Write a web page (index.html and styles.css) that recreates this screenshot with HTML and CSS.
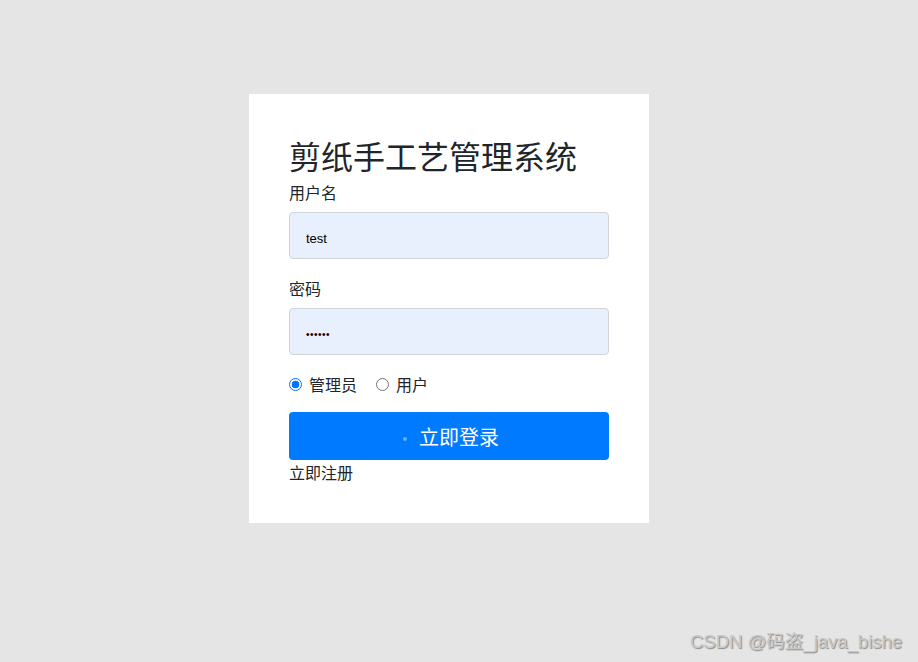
FILE: index.html
```html
<!DOCTYPE html>
<html lang="zh">
<head>
<meta charset="utf-8">
<title>剪纸手工艺管理系统</title>
<link rel="stylesheet" href="styles.css">
</head>
<body>
<div class="page">
  <form class="card">
    <h1 class="title">剪纸手工艺管理系统</h1>
    <div class="group">
      <label class="label">用户名</label>
      <div class="input">test</div>
    </div>
    <div class="group">
      <label class="label">密码</label>
      <div class="input pwd">••••••</div>
    </div>
    <div class="group radios">
      <label class="radio"><span class="dot on"></span>管理员</label>
      <label class="radio"><span class="dot"></span>用户</label>
    </div>
    <button type="button" class="btn"><span class="ripple"></span>立即登录</button>
    <a class="reg">立即注册</a>
  </form>
</div>
<div class="mark">CSDN @码盗_java_bishe</div>
</body>
</html>
```
FILE: styles.css
```css
html, body { margin: 0; padding: 0; }
body {
  background: #e5e5e5;
  font-family: "Noto Sans CJK SC", "Liberation Sans", sans-serif;
  color: #212529;
  width: 918px;
  height: 662px;
  overflow: hidden;
  position: relative;
}
.page {
  display: flex;
  justify-content: center;
  padding-top: 94px;
}
.card {
  width: 320px;
  background: #fff;
  padding: 40px 40px 39px;
  display: flex;
  flex-direction: column;
  margin-right: 20px;
}
.title {
  font-size: 32px;
  font-weight: 400;
  line-height: 38px;
  margin: 2px 0 6px;
  letter-spacing: 0;
}
.group { margin-bottom: 17px; display: flex; flex-direction: column; }
.label {
  font-size: 16px;
  line-height: 24px;
  margin-bottom: 8px;
}
.input {
  height: 40px;
  border: 1px solid #ced4da;
  border-radius: 4px;
  background: #e8f0fe;
  box-sizing: content-box;
  padding: 5px 16px 0;
  display: flex;
  align-items: center;
  font-family: "Liberation Sans", Arial, sans-serif;
  font-size: 13px;
  color: #000;
}
.pwd { font-size: 10px; letter-spacing: 0.5px; }
.radios {
  flex-direction: row;
  align-items: center;
  height: 24px;
  gap: 19px;
  margin-bottom: 16px;
}
.radio {
  display: flex;
  align-items: center;
  font-size: 16px;
  line-height: 24px;
}
.dot {
  width: 11px;
  height: 11px;
  border: 1px solid #767676;
  border-radius: 50%;
  margin-right: 7px;
  box-sizing: content-box;
}
.dot.on {
  border-color: #0075ff;
  background: radial-gradient(circle, #0075ff 0 3.5px, #fff 4.2px);
}
.btn {
  height: 48px;
  border: 0;
  border-radius: 4px;
  background: #007bff;
  color: #fff;
  font-family: "Noto Sans CJK SC", sans-serif;
  font-size: 20px;
  display: flex;
  align-items: center;
  justify-content: center;
  padding: 0 0 0 4px;
  margin: 0;
}
.ripple {
  width: 4px;
  height: 4px;
  border-radius: 50%;
  background: #6aaeff;
  margin-right: 12px;
  margin-top: 6px;
}
.reg {
  font-size: 16px;
  line-height: 24px;
  color: #212529;
}
.mark {
  position: absolute;
  left: 690px;
  top: 627px;
  font-family: "Liberation Sans", "Noto Sans CJK SC", sans-serif;
  font-size: 18.5px;
  color: #c8c8c8;
  text-shadow: 1px 1px 1px #8a8a8a;
}
```
